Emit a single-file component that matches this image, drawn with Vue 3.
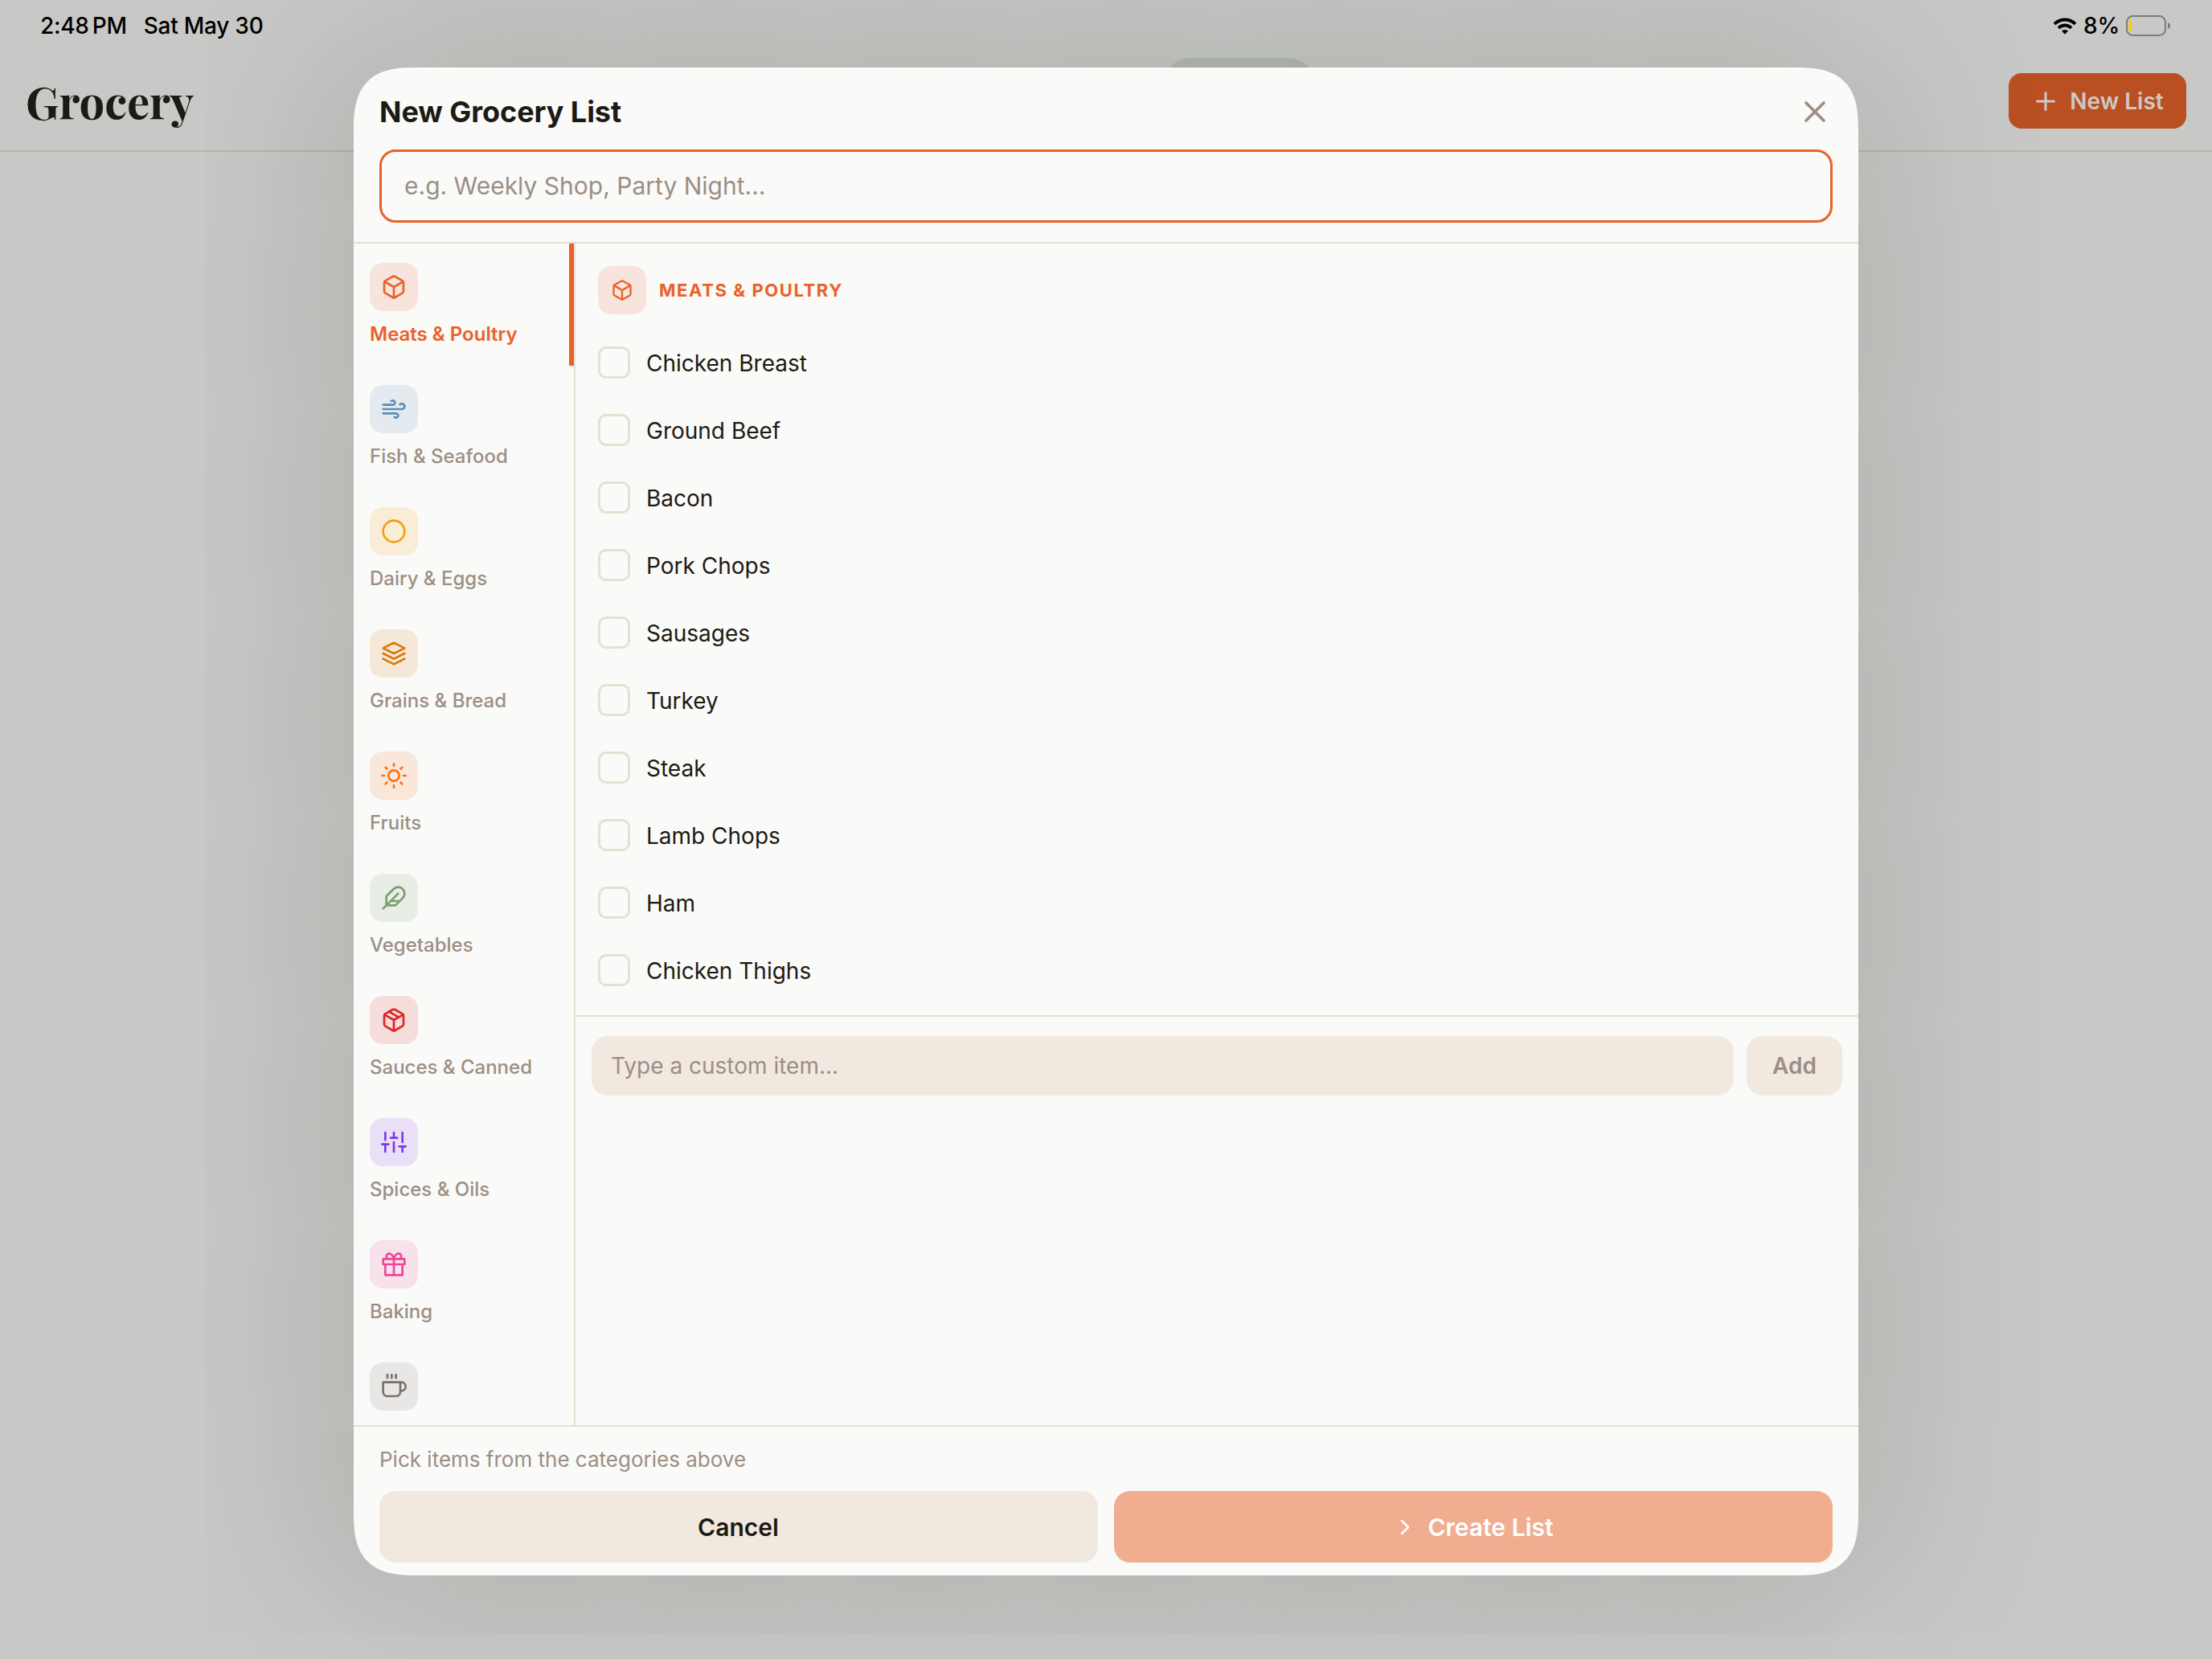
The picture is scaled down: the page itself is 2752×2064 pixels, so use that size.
<script setup>
import { ref, computed } from 'vue';

const box = '<path d="M21 16V8a2 2 0 0 0-1-1.73l-7-4a2 2 0 0 0-2 0l-7 4A2 2 0 0 0 3 8v8a2 2 0 0 0 1 1.73l7 4a2 2 0 0 0 2 0l7-4A2 2 0 0 0 21 16z"/><path d="M3.27 6.96 12 12.01l8.73-5.05M12 22.08V12"/>';

const categories = ref([
  { name: 'Meats & Poultry', color: '#e8622a', icon: box },
  { name: 'Fish & Seafood', color: '#5b8db8', icon: '<path d="M9.59 4.59A2 2 0 1 1 11 8H2m10.59 11.41A2 2 0 1 0 14 16H2m15.73-8.27A2.5 2.5 0 1 1 19.5 12H2"/>' },
  { name: 'Dairy & Eggs', color: '#f59e0b', icon: '<circle cx="12" cy="12" r="10"/>' },
  { name: 'Grains & Bread', color: '#d97706', icon: '<path d="M12 2 2 7l10 5 10-5-10-5zM2 17l10 5 10-5M2 12l10 5 10-5"/>' },
  { name: 'Fruits', color: '#f97316', icon: '<circle cx="12" cy="12" r="5"/><path d="M12 1v2M12 21v2M4.22 4.22l1.42 1.42M18.36 18.36l1.42 1.42M1 12h2M21 12h2M4.22 19.78l1.42-1.42M18.36 5.64l1.42-1.42"/>' },
  { name: 'Vegetables', color: '#7a9e6e', icon: '<path d="M20.24 12.24a6 6 0 0 0-8.49-8.49L5 10.5V19h8.5zM16 8 2 22M17.5 15H9"/>' },
  { name: 'Sauces & Canned', color: '#dc2626', icon: '<path d="m16.5 9.4-9-5.19"/>' + box },
  { name: 'Spices & Oils', color: '#7c3aed', icon: '<path d="M4 21v-7M4 10V3M12 21v-9M12 8V3M20 21v-5M20 12V3M1 14h6M9 8h6M17 16h6"/>' },
  { name: 'Baking', color: '#ec4899', icon: '<path d="M20 12v10H4V12M2 7h20v5H2zM12 22V7M12 7H7.5a2.5 2.5 0 0 1 0-5C11 2 12 7 12 7zM12 7h4.5a2.5 2.5 0 0 0 0-5C13 2 12 7 12 7z"/>' },
  { name: '', color: '#78716c', icon: '<path d="M18 8h1a4 4 0 0 1 0 8h-1M2 8h16v9a4 4 0 0 1-4 4H6a4 4 0 0 1-4-4V8zM6 1v3M10 1v3M14 1v3"/>' },
]);

const items = ref(['Chicken Breast', 'Ground Beef', 'Bacon', 'Pork Chops', 'Sausages', 'Turkey', 'Steak', 'Lamb Chops', 'Ham', 'Chicken Thighs']);
const selected = ref([]);
const active = ref(0);
const listName = ref('');
const customItem = ref('');

const current = computed(() => categories.value[active.value]);

const toggle = (item) => {
  const i = selected.value.indexOf(item);
  if (i === -1) {
    selected.value.push(item);
  } else {
    selected.value.splice(i, 1);
  }
}

const addItem = () => {
  if (customItem.value !== '') {
    items.value.push(customItem.value);
    customItem.value = '';
  }
}
</script>

<template>
  <div class="screen">
    <div class="status">
      <span class="time">2:48<i></i>PM</span>
      <span class="date">Sat May 30</span>
      <svg class="wifi" viewBox="0 0 30 21">
        <path d="M2 7.8a18.4 18.4 0 0 1 26 0" />
        <path d="M7 12.9a11.3 11.3 0 0 1 16 0" />
        <path class="dot" d="M15 20.8l-4-4.2a5.8 5.8 0 0 1 8 0z" />
      </svg>
      <span class="percent">8%</span>
      <svg class="battery" viewBox="0 0 56 26">
        <rect x="1" y="1" width="48" height="24" rx="7.5" />
        <path class="nub" d="M52 9c4 1.2 4 6.800 0 8z" />
        <path class="charge" d="M7 6v14H5.500Q3.500 20 3.500 17V9Q3.500 6 5.500 6z" />
      </svg>
    </div>
    <header class="topbar">
      <h1>Grocery</h1>
      <button class="new-list">
        <svg class="icon" viewBox="0 0 24 24"><path d="M12 5v14M5 12h14" /></svg>
        New List
      </button>
    </header>
    <div class="pill"></div>

    <div class="overlay">
      <div class="modal">
        <div class="modal-head">
          <div class="title-row">
            <h2>New Grocery List</h2>
            <svg class="icon close" viewBox="0 0 24 24"><path d="M18 6 6 18M6 6l12 12" /></svg>
          </div>
          <input class="name-input" type="text" v-model="listName" placeholder="e.g. Weekly Shop, Party Night..." />
        </div>

        <div class="modal-body">
          <nav class="sidebar">
            <div
              v-for="(cat, index) in categories"
              :key="index"
              class="category"
              :class="{ active: index === active }"
              @click="active = index"
            >
              <span class="tile" :style="{ background: cat.color + '22', color: cat.color }">
                <svg class="icon" viewBox="0 0 24 24" v-html="cat.icon"></svg>
              </span>
              <span class="label" :style="index === active ? { color: cat.color } : null">{{ cat.name }}</span>
            </div>
          </nav>

          <section class="content">
            <div class="items">
              <div class="group" :style="{ color: current.color }">
                <span class="tile small" :style="{ background: current.color + '22' }">
                  <svg class="icon" viewBox="0 0 24 24" v-html="current.icon"></svg>
                </span>
                <h3>{{ current.name }}</h3>
              </div>
              <div v-for="item in items" :key="item" class="item" @click="toggle(item)">
                <span class="check" :class="{ checked: selected.includes(item) }"></span>
                <span class="item-name">{{ item }}</span>
              </div>
            </div>
            <form class="custom" @submit.prevent="addItem">
              <input type="text" v-model="customItem" placeholder="Type a custom item..." />
              <button type="submit">Add</button>
            </form>
          </section>
        </div>

        <footer class="modal-foot">
          <p>Pick items from the categories above</p>
          <div class="actions">
            <button class="cancel">Cancel</button>
            <button class="create">
              <svg class="icon" viewBox="0 0 24 24"><path d="m9 18 6-6-6-6" /></svg>
              Create List
            </button>
          </div>
        </footer>
      </div>
    </div>
  </div>
</template>

<style>
body {
  margin: 0;
  background: #c8c8c6;
}
</style>

<style scoped>
* {
  box-sizing: border-box;
}

.screen {
  position: relative;
  width: 2752px;
  height: 2064px;
  overflow: hidden;
  background: #c8c8c6;
  color: #1c1a14;
  font-family: Inter, "Liberation Sans", sans-serif;
}

h1, h2, h3, p {
  margin: 0;
}

button, input {
  font-family: inherit;
  border: none;
  outline: none;
}

button {
  display: flex;
  align-items: center;
  justify-content: center;
  padding: 0;
  font-weight: 600;
}

input::placeholder {
  color: #9c8e84;
  opacity: 1;
}

.icon {
  display: block;
  flex: none;
  fill: none;
  stroke: currentColor;
  stroke-width: 2;
  stroke-linecap: round;
  stroke-linejoin: round;
}

/* status bar */
.status {
  display: flex;
  align-items: center;
  height: 64px;
  padding: 0 51px 0 50px;
  color: #000;
  font-size: 28px;
  font-weight: 500;
  letter-spacing: -0.25px;
}

.time i {
  display: inline-block;
  width: 4px;
}

.date {
  margin-left: 21px;
}

.wifi {
  width: 30px;
  height: 21px;
  margin-left: auto;
  fill: none;
  stroke: #000;
  stroke-width: 4;
}

.wifi .dot {
  fill: #000;
  stroke: none;
}

.percent {
  margin: 0 8px;
}

.battery {
  width: 56px;
  height: 26px;
  fill: none;
  stroke: #7b7b79;
  stroke-width: 2;
}

.battery .nub {
  fill: #7b7b79;
  stroke: none;
}

.battery .charge {
  fill: #ffcc00;
  stroke: none;
}

.topbar {
  display: flex;
  align-items: center;
  justify-content: space-between;
  height: 125px;
  padding: 0 32px;
  border-bottom: 2px solid #b8b4a4;
}

h1 {
  font-family: "Playfair Display", "Liberation Serif", serif;
  font-size: 56px;
  font-weight: 700;
}

.new-list {
  width: 221px;
  height: 69px;
  gap: 12px;
  border-radius: 16px;
  background: #ba4f22;
  color: #cdc8c5;
  font-size: 28px;
}

.new-list .icon {
  width: 36px;
  height: 36px;
}

/* tab pill peeking out from behind the sheet */
.pill {
  position: absolute;
  top: 72px;
  left: 1446px;
  width: 192px;
  height: 72px;
  border-radius: 36px;
  background: #b4b8b2;
}

.overlay {
  position: absolute;
  inset: 0;
  display: flex;
  justify-content: center;
  align-items: flex-start;
  padding-top: 84px;
}

.modal {
  display: flex;
  flex-direction: column;
  width: 1872px;
  height: 1876px;
  overflow: hidden;
  border-radius: 62px;
  background: #fafaf8;
  box-shadow: 0 0 240px rgba(8, 34, 0, 0.21);
}

@supports (corner-shape: superellipse(1.5)) {
  .modal {
    border-radius: 80px;
    corner-shape: superellipse(1.5);
  }
}

.modal-head {
  padding: 32px 32px 24px;
  border-bottom: 2px solid #e8dfd3;
}

.title-row {
  display: flex;
  align-items: center;
  justify-content: space-between;
  height: 46px;
  margin-bottom: 24px;
}

h2 {
  font-size: 36px;
  font-weight: 700;
  letter-spacing: -0.05px;
}

.close {
  width: 44px;
  height: 44px;
  color: #9c8e84;
}

.name-input {
  display: block;
  width: 100%;
  height: 91px;
  padding: 0 28px 1px;
  border: 3px solid #e8622a;
  border-radius: 20px;
  background: transparent;
  font-size: 30px;
}

.modal-body {
  display: flex;
  flex: 1;
  min-height: 0;
}

.sidebar {
  width: 276px;
  overflow: hidden;
  border-right: 2px solid #e8dfd3;
}

.category {
  display: flex;
  flex-direction: column;
  align-items: flex-start;
  gap: 13px;
  height: 152px;
  padding: 24px 14px 0 20px;
  border-right: 6px solid transparent;
}

.category.active {
  border-right-color: #e8622a;
}

.tile {
  display: flex;
  align-items: center;
  justify-content: center;
  flex: none;
  width: 60px;
  height: 60px;
  border-radius: 16px;
}

.tile .icon {
  width: 32px;
  height: 32px;
}

.tile.small .icon {
  width: 28px;
  height: 28px;
}

.label {
  color: #9c8e84;
  font-size: 24px;
  font-weight: 500;
  line-height: 32px;
  white-space: nowrap;
}

.active .label {
  font-weight: 600;
}

.content {
  flex: 1;
}

.items {
  padding: 28px 28px 14px;
  border-bottom: 2px solid #e8dfd3;
}

.group {
  display: flex;
  align-items: center;
  gap: 16px;
  margin-bottom: 18px;
}

h3 {
  font-size: 22px;
  font-weight: 700;
  letter-spacing: 1.6px;
  text-transform: uppercase;
}

.item {
  display: flex;
  align-items: center;
  gap: 20px;
  height: 84px;
  font-size: 28px;
}

.item-name {
  padding-top: 2px;
}

.check {
  width: 40px;
  height: 40px;
  border: 3px solid #e8dfd3;
  border-radius: 10px;
}

.check.checked {
  border-color: #e8622a;
  background: #e8622a;
}

.custom {
  display: flex;
  gap: 16px;
  padding: 24px 20px;
}

.custom input {
  flex: 1;
  height: 74px;
  padding: 0 24px;
  border-radius: 20px;
  background: #f1e9e0;
  font-size: 28px;
}

.custom button {
  width: 119px;
  height: 74px;
  border-radius: 20px;
  background: #f1e9e0;
  color: #9c8e84;
  font-size: 28px;
}

.modal-foot {
  height: 187px;
  padding: 23px 32px 0;
  border-top: 2px solid #e8dfd3;
}

.modal-foot p {
  margin-bottom: 21px;
  color: #9c8e84;
  font-size: 26px;
  line-height: 36px;
}

.actions {
  display: flex;
  gap: 20px;
}

.actions button {
  flex: 1;
  height: 89px;
  padding-right: 1px;
  border-radius: 20px;
  font-size: 30px;
}

.cancel {
  background: #f1e9e0;
  color: #1c1a14;
}

.create {
  gap: 12px;
  background: #f1ad90;
  color: #fff;
}

.create .icon {
  width: 32px;
  height: 32px;
}
</style>
